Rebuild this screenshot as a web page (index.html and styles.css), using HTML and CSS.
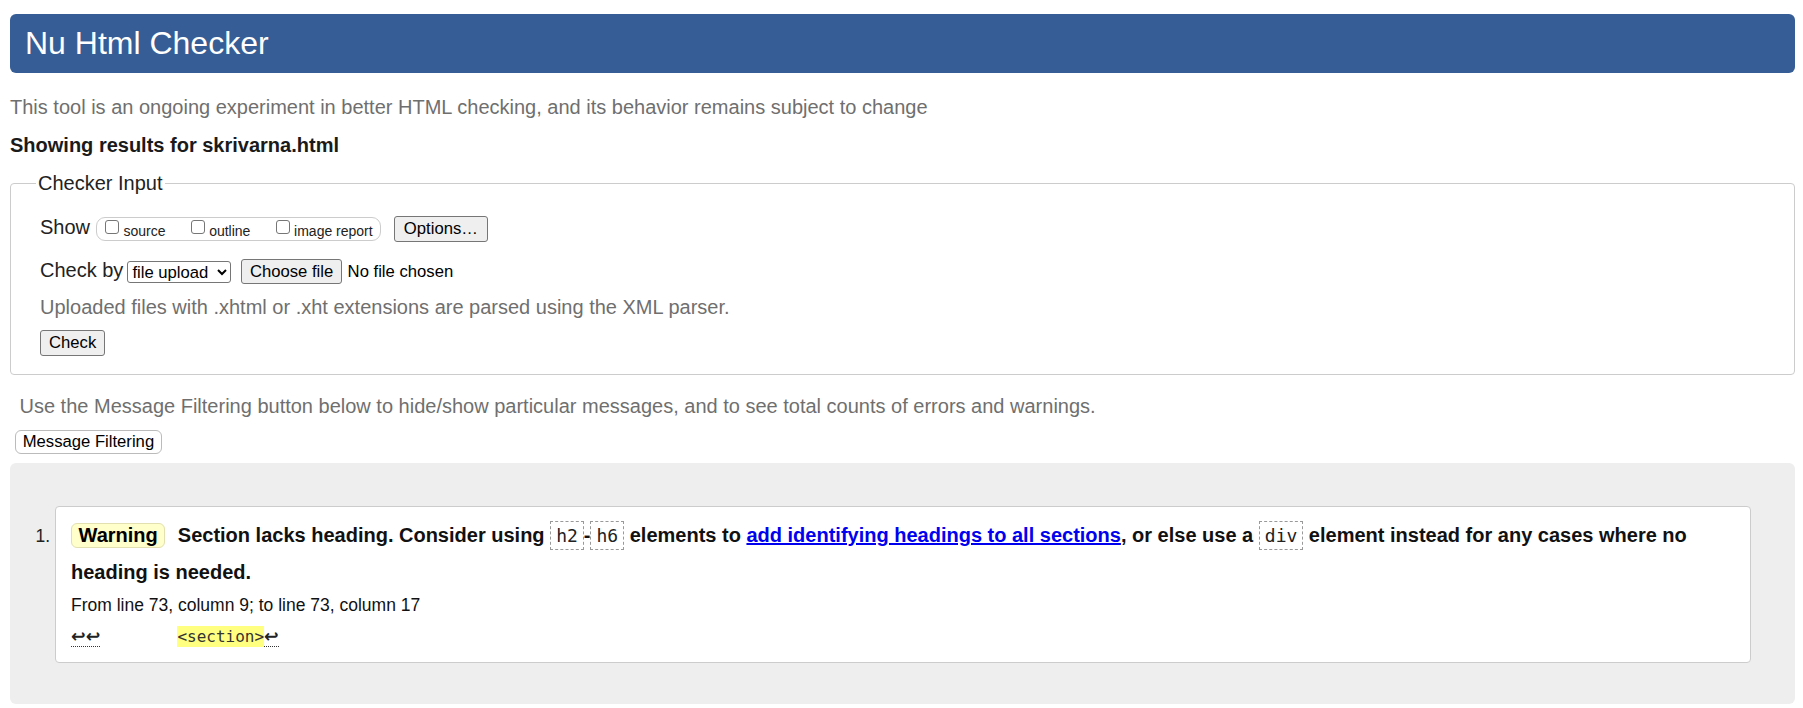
FILE: index.html
```html
<!DOCTYPE html>
<html lang="en">
<head>
<meta charset="utf-8">
<title>Showing results for skrivarna.html - Nu Html Checker</title>
<link rel="stylesheet" href="styles.css">
</head>
<body>
<h1 class="title">Nu Html Checker</h1>
<p class="intro">This tool is an ongoing experiment in better HTML checking, and its behavior remains subject to change</p>
<p class="showing">Showing results for skrivarna.html</p>
<form class="checker">
<fieldset class="input-box">
<legend class="input-legend">Checker Input</legend>
<div class="row row-show">
<span class="label label-show">Show</span>
<span class="opts">
<label class="opt"><input type="checkbox" class="cb"><span class="opt-text">source</span></label>
<label class="opt"><input type="checkbox" class="cb"><span class="opt-text">outline</span></label>
<label class="opt opt-last"><input type="checkbox" class="cb"><span class="opt-text">image report</span></label>
</span>
<button type="button" class="btn btn-options">Options…</button>
</div>
<div class="row row-by">
<span class="label label-by">Check by</span>
<select class="sel"><option>file upload</option></select>
<button type="button" class="btn btn-file">Choose file</button>
<span class="nofile">No file chosen</span>
</div>
<p class="note">Uploaded files with .xhtml or .xht extensions are parsed using the XML parser.</p>
<div class="row row-submit"><button type="button" class="btn btn-check">Check</button></div>
</fieldset>
</form>
<p class="filter-hint">Use the Message Filtering button below to hide/show particular messages, and to see total counts of errors and warnings.</p>
<button type="button" class="filter-btn">Message Filtering</button>
<div class="results">
<ol class="messages">
<li class="msg">
<p class="msg-text"><strong class="badge">Warning</strong> <span>Section lacks heading. Consider using <code class="tag">h2</code>-<code class="tag">h6</code> elements to <a class="link" href="#">add identifying headings to all sections</a>, or else use a <code class="tag">div</code> element instead for any cases where no heading is needed.</span></p>
<p class="location">From line 73, column 9; to line 73, column 17</p>
<p class="extract"><code class="extract-code"><span class="lf">↩↩</span>        <b class="hl">&lt;section&gt;</b><span class="lf">↩</span></code></p>
</li>
</ol>
</div>
</body>
</html>
```
FILE: styles.css
```css
html {
  background: #fff;
}

body {
  margin: 10px 8px 10px 10px;
  font-family: "Liberation Sans", Arial, sans-serif;
  font-size: 20px;
  color: #222;
}

.title {
  margin: 4px 0 0;
  padding: 11px 15px;
  font-size: 32px;
  font-weight: normal;
  line-height: 37px;
  color: #fff;
  background: #365d95;
  border-radius: 6px;
}

.intro {
  margin: 23px 0 0;
  line-height: 23px;
  color: #6f6f6f;
}

.showing {
  margin: 15px 0 0;
  line-height: 23px;
  font-weight: bold;
  color: #1a1a1a;
}

.checker {
  margin: 15.4px 0 0;
}

.input-box {
  margin: 0;
  padding: 21px 29px 18px;
  border: 1px solid #ccc;
  border-radius: 4px;
  min-width: 0;
}

.input-legend {
  margin-left: -4px;
  padding: 0 2px;
  line-height: 23px;
  color: #222;
}

.row {
  display: flex;
  align-items: center;
}

.row-show {
  height: 26px;
}

.label {
  line-height: 23px;
  color: #222;
}

.label-show {
  margin-right: 6.4px;
  margin-bottom: 3px;
}

.label-by {
  margin-right: 4px;
  margin-bottom: 2px;
}

.opts {
  display: flex;
  align-items: center;
  box-sizing: border-box;
  height: 24px;
  padding: 0 7.6px 0 7.6px;
  border: 1px solid #ccc;
  border-radius: 9px;
}

.opt {
  display: flex;
  align-items: center;
  margin-right: 25.3px;
}

.opt-last {
  margin-right: 0;
}

.cb {
  appearance: none;
  -webkit-appearance: none;
  box-sizing: border-box;
  width: 14px;
  height: 14px;
  margin: 0 4.4px 4px 0;
  border: 1px solid #767676;
  border-radius: 3px;
  background: #fff;
}

.opt-text {
  font-size: 14px;
  line-height: 16px;
  margin-top: 4px;
  color: #222;
}

.btn {
  box-sizing: border-box;
  height: 26px;
  padding: 0 8px;
  font-family: "Liberation Sans", Arial, sans-serif;
  font-size: 16.667px;
  color: #000;
  background: #efefef;
  border: 1px solid #767676;
  border-radius: 3px;
}

.btn-options {
  margin-left: 12.6px;
  padding: 0 9px;
}

.row-by {
  margin-top: 17px;
  height: 25px;
}

.sel {
  box-sizing: border-box;
  width: 104px;
  height: 22px;
  font-family: "Liberation Sans", Arial, sans-serif;
  font-size: 16.667px;
  color: #000;
  background: #fff;
  border: 1px solid #767676;
  border-radius: 3px;
}

.btn-file {
  height: 25px;
  margin-left: 9.5px;
}

.nofile {
  margin-left: 5.4px;
  font-size: 16.667px;
  color: #000;
}

.note {
  margin: 11.5px 0 0;
  line-height: 23px;
  color: #6f6f6f;
}

.row-submit {
  margin-top: 11.5px;
}

.filter-hint {
  margin: 19.7px 0 0;
  padding-left: 9.5px;
  line-height: 23px;
  color: #6f6f6f;
}

.filter-btn {
  display: block;
  box-sizing: border-box;
  height: 24px;
  margin: 12.3px 0 0 5px;
  padding: 0 6.7px;
  font-family: "Liberation Sans", Arial, sans-serif;
  font-size: 16.667px;
  color: #000;
  background: #fff;
  border: 1px solid #bbb;
  border-radius: 6px;
}

.results {
  margin-top: 8.9px;
  padding: 42.9px 44px 41px 45px;
  background: #eee;
  border-radius: 6px;
}

.messages {
  margin: 0;
  padding: 0;
}

.msg {
  list-style: decimal outside;
  padding: 9.5px 15px 14px;
  font-size: 17.5px;
  color: #222;
  background: #fff;
  border: 1px solid #ccc;
  border-radius: 4px;
}

.msg-text {
  margin: 0;
  font-size: 20px;
  font-weight: bold;
  line-height: 36.6px;
  color: #111;
}

.badge {
  display: inline-block;
  margin-right: 7px;
  padding: 0 6.5px;
  line-height: 23px;
  color: #000;
  background: #ffffcc;
  border: 1px solid #e2e0b0;
  border-radius: 6px;
}

.tag {
  padding: 3px 5px;
  font-family: "DejaVu Sans Mono", "Liberation Mono", monospace;
  font-size: 18px;
  font-weight: normal;
  color: #222;
  border: 1px dashed #999;
}

.link {
  color: #0000ee;
  text-decoration: underline;
}

.location {
  margin: 3.7px 0 0;
  font-size: 17.5px;
  color: #111;
}

.extract {
  margin: 9px 0 0;
  line-height: 22px;
}

.extract-code {
  font-family: "DejaVu Sans Mono", "Liberation Mono", monospace;
  font-size: 16px;
  white-space: pre;
  color: #333;
}

.lf {
  font-family: "DejaVu Sans", sans-serif;
  font-size: 17.5px;
  font-weight: bold;
  color: #222;
  border-bottom: 1px dotted #333;
}

.hl {
  font-weight: normal;
  padding: 1px 0;
  background: #ffff80;
}
```
